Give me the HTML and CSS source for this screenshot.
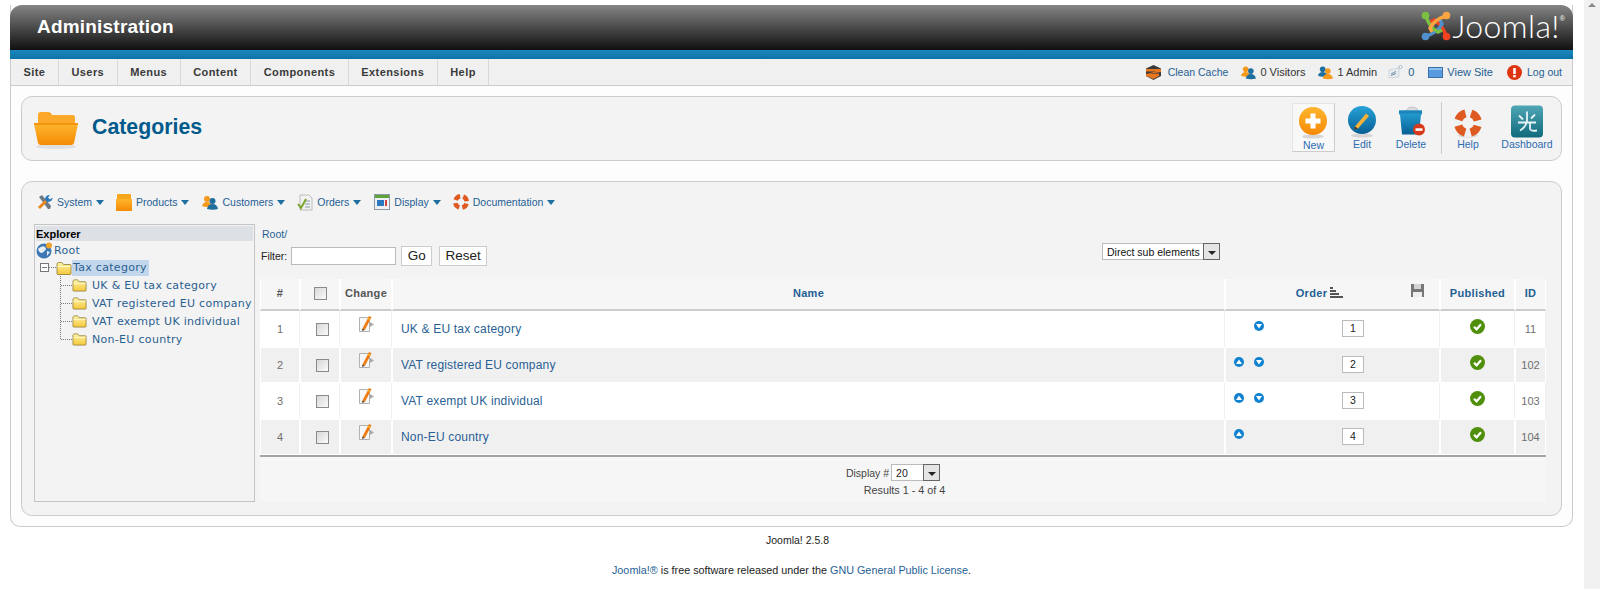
FILE: index.html
```html
<!DOCTYPE html>
<html lang="en">
<head>
<meta charset="utf-8">
<title>Categories - Administration</title>
<link rel="stylesheet" href="styles.css">
</head>
<body>
<svg class="defs" width="0" height="0" aria-hidden="true">
  <defs>
    <linearGradient id="gOrange" x1="0" y1="0" x2="0" y2="1"><stop offset="0" stop-color="#ffb52e"/><stop offset="1" stop-color="#f58a05"/></linearGradient>
    <linearGradient id="gBlue" x1="0" y1="0" x2="0" y2="1"><stop offset="0" stop-color="#27a3d8"/><stop offset="1" stop-color="#075f95"/></linearGradient>
    <linearGradient id="gFolder" x1="0" y1="0" x2="0" y2="1"><stop offset="0" stop-color="#fff3a8"/><stop offset="1" stop-color="#f5c73a"/></linearGradient>
    <linearGradient id="gTeal" x1="0" y1="0" x2="0" y2="1"><stop offset="0" stop-color="#4fa6b5"/><stop offset="1" stop-color="#116a7d"/></linearGradient>
    <symbol id="i-folder" viewBox="0 0 16 14">
      <path d="M1 3.500V12.500Q1 13.500 2 13.500H14Q15 13.500 15 12.500V4.500Q15 3.500 14 3.500H7.500L6 1.500H2.500Q1 1.500 1 3.500Z" fill="url(#gFolder)" stroke="#8c7a32" stroke-width=".8"/>
      <path d="M1.500 5.500H14.500" stroke="#fff8c8" stroke-width="1"/>
    </symbol>
    <symbol id="i-edit" viewBox="0 0 17 18">
      <path d="M1 2.500H11V16.500H1Z" fill="#f7f7f7" stroke="#b0b0b0"/>
      <path d="M11.500 7L15.500 9.500L11.500 12Z" fill="#aaa"/>
      <path d="M4 13.500L10.500 1L13 2.300L6.500 14.800Z" fill="#f07a12"/>
      <path d="M4 13.500L3.500 16L6.500 14.800Z" fill="#5a3a20"/>
      <path d="M9.300 3.300L11.800 4.500" stroke="#ffd23c" stroke-width="1"/>
    </symbol>
    <symbol id="i-up" viewBox="0 0 10 10"><circle cx="5" cy="5" r="5" fill="#0f82d0"/><path d="M5 2.500L8 7H2Z" fill="#fff"/></symbol>
    <symbol id="i-down" viewBox="0 0 10 10"><circle cx="5" cy="5" r="5" fill="#0f82d0"/><path d="M5 7.500L2 3H8Z" fill="#fff"/></symbol>
    <symbol id="i-ok" viewBox="0 0 15 15"><circle cx="7.500" cy="7.500" r="7.500" fill="#4f8f0c"/><path d="M4 7.800L6.600 10.300L11 5.200" fill="none" stroke="#fff" stroke-width="2.200"/></symbol>
    <symbol id="i-people" viewBox="0 0 16 15">
      <circle cx="5" cy="4" r="3" fill="#f59a1c"/><path d="M0 11Q1 7 5 7T10 11Q5 13 0 11Z" fill="#f59a1c"/>
      <circle cx="10.500" cy="6" r="3" fill="#1e6e9e"/><path d="M5 14Q6 9 10.500 9T16 14Q10.500 15.500 5 14Z" fill="#1e6e9e"/>
    </symbol>
    <symbol id="i-people2" viewBox="0 0 16 15">
      <circle cx="5" cy="4" r="3" fill="#1e6e9e"/><path d="M0 11Q1 7 5 7T10 11Q5 13 0 11Z" fill="#1e6e9e"/>
      <circle cx="10.500" cy="6" r="3" fill="#f59a1c"/><path d="M5 14Q6 9 10.500 9T16 14Q10.500 15.500 5 14Z" fill="#f59a1c"/>
    </symbol>
    <symbol id="i-ring" viewBox="0 0 28 28">
      <circle cx="14" cy="14" r="10" fill="none" stroke="#eef1f3" stroke-width="8"/>
      <circle cx="14" cy="14" r="10" fill="none" stroke="#df5a20" stroke-width="8" stroke-dasharray="10 5.700" stroke-dashoffset="-2.850"/>
    </symbol>
  </defs>
</svg>

<div class="page">
  <div class="wrap">
    <header class="masthead">
      <h1 class="admin-title">Administration</h1>
      <div class="logo">
        <svg class="logo-mark" viewBox="0 0 30 30" width="30" height="30" aria-hidden="true">
          <path d="M25 25Q22 14 13 9L9 11" fill="none" stroke="#f44321" stroke-width="3.400"/>
          <path d="M5 25Q16 22 21 13L19 9" fill="none" stroke="#5091cd" stroke-width="3.400"/>
          <path d="M5 5Q8 16 17 21L21 19" fill="none" stroke="#7ac143" stroke-width="3.400"/>
          <path d="M25 5Q14 8 9 17L11 21" fill="none" stroke="#f9a541" stroke-width="3.400"/>
          <circle cx="4.500" cy="4.500" r="3.800" fill="#7ac143"/>
          <circle cx="25.500" cy="4.500" r="3.800" fill="#f9a541"/>
          <circle cx="25.500" cy="25.500" r="3.800" fill="#f44321"/>
          <circle cx="4.500" cy="25.500" r="3.800" fill="#5091cd"/>
        </svg>
        <span class="logo-word">Joomla!</span><sup class="logo-reg">®</sup>
      </div>
    </header>
    <div class="band"></div>
    <nav class="menubar">
      <ul class="menu">
        <li>Site</li><li>Users</li><li>Menus</li><li>Content</li><li>Components</li><li>Extensions</li><li>Help</li>
      </ul>
      <div class="status">
        <a class="status-item cache">
          <svg width="17" height="17" viewBox="0 0 17 17" aria-hidden="true"><path d="M8.500 1L16 4.500V12L8.500 16L1 12V4.500Z" fill="#3a3a3a"/><path d="M1 5H16V8L3 10L14 9.500V12L8.500 15L1 12V10L11 7.500H1Z" fill="#e8761e"/></svg>
          <span>Clean Cache</span>
        </a>
        <span class="status-item dark"><svg width="15" height="15" aria-hidden="true"><use href="#i-people"/></svg><span>0 Visitors</span></span>
        <span class="status-item dark"><svg width="15" height="15" aria-hidden="true"><use href="#i-people2"/></svg><span>1 Admin</span></span>
        <span class="status-item msg">
          <svg width="15" height="14" viewBox="0 0 15 14" aria-hidden="true"><path d="M1 5L11 3V12L1 13Z" fill="#e6edf2" stroke="#c4ccd2" stroke-width=".7"/><path d="M3 9L8 6.500M3 10.500L8 8.500" stroke="#6f8ba3"/><circle cx="12.500" cy="2" r="1.500" fill="#fff" stroke="#88a2b6" stroke-width=".7"/></svg>
          <span>0</span>
        </span>
        <a class="status-item view">
          <svg width="15" height="11" viewBox="0 0 15 11" aria-hidden="true"><rect x=".5" y=".5" width="14" height="10" fill="#5a9be0" stroke="#3b6fa8"/><path d="M1 1H14V3H1Z" fill="#8cc0f0"/></svg>
          <span>View Site</span>
        </a>
        <a class="status-item logout">
          <svg width="15" height="15" viewBox="0 0 15 15" aria-hidden="true"><circle cx="7.500" cy="7.500" r="7.500" fill="#df3410"/><rect x="6.200" y="3" width="2.600" height="6" fill="#fff"/><rect x="6.200" y="10" width="2.600" height="2.300" fill="#fff"/></svg>
          <span>Log out</span>
        </a>
      </div>
    </nav>

    <section class="titlebox">
      <div class="title-left">
        <svg class="title-icon" width="46" height="40" viewBox="0 0 46 40" aria-hidden="true">
          <ellipse cx="23" cy="36.500" rx="20" ry="2.500" fill="#e0e0e0"/>
          <path d="M5 11V5Q5 2 8 2H15Q18 2 19 5H40Q42 5 42 8V13H5Z" fill="#fca82a"/>
          <path d="M1 14H45L41 33Q40.500 35 38 35H8Q5.500 35 5 33Z" fill="url(#gOrange)"/>
          <path d="M1 13H45V15H1Z" fill="#f59410"/>
        </svg>
        <h2 class="page-title">Categories</h2>
      </div>
      <div class="toolbar">
        <a class="tool tool-new">
          <svg width="30" height="32" viewBox="0 0 30 32" aria-hidden="true"><ellipse cx="15" cy="30" rx="11" ry="2" fill="#d6d6d6"/><circle cx="15" cy="14.500" r="14" fill="url(#gOrange)"/><path d="M12.500 7H17.500V12H22.500V17H17.500V22H12.500V17H7.500V12H12.500Z" fill="#fff"/></svg>
          <span>New</span>
        </a>
        <a class="tool tool-edit">
          <svg width="30" height="32" viewBox="0 0 30 32" aria-hidden="true"><ellipse cx="15" cy="30" rx="11" ry="2" fill="#d6d6d6"/><circle cx="15" cy="14.500" r="14" fill="url(#gBlue)"/><path d="M8 21L19 8L22 10.500L11 23L7 24Z" fill="#f7b23a"/><path d="M7 24L8 21L11 23Z" fill="#333"/></svg>
          <span>Edit</span>
        </a>
        <a class="tool tool-delete">
          <svg width="30" height="32" viewBox="0 0 30 32" aria-hidden="true"><path d="M10 5Q14 -1 21 3L22 6H10Z" fill="#dcdcdc" stroke="#aaa" stroke-width=".6"/><path d="M3 5H26V9H25L23 29H6L4 9H3Z" fill="url(#gBlue)"/><path d="M3 5H26V8H3Z" fill="#1c84b8"/><circle cx="23" cy="24" r="6" fill="#d73a1a"/><rect x="19.500" y="22.800" width="7" height="2.500" fill="#fff"/></svg>
          <span>Delete</span>
        </a>
        <span class="tool-sep"></span>
        <a class="tool tool-help">
          <svg width="30" height="32" viewBox="0 0 30 32" aria-hidden="true"><ellipse cx="15" cy="30" rx="10" ry="2" fill="#d6d6d6"/><svg x="1" y="1" width="28" height="28"><use href="#i-ring"/></svg></svg>
          <span>Help</span>
        </a>
        <a class="tool tool-dash">
          <svg width="32" height="32" viewBox="0 0 32 32" aria-hidden="true"><rect width="32" height="32" rx="4" fill="url(#gTeal)"/><path d="M16 6V15Q15 22 9 25M8 10L12 14M24 9L20 13M7 17H25M19 17V23Q19 26 26 25" fill="none" stroke="#e6f4f6" stroke-width="1.800"/></svg>
          <span>Dashboard</span>
        </a>
      </div>
    </section>

    <section class="mainbox">
      <ul class="submenu">
        <li class="sub-system">
          <svg width="16" height="16" viewBox="0 0 16 16" aria-hidden="true"><path d="M2 3L5 1L14 12L13 15L11 15Z" fill="#6d7a86"/><path d="M3 15L1 13L9 5L11 7Z" fill="#e8851c"/><path d="M8 6Q8 1 13 1L11 3.500L13 5.500L15.500 3.500Q15.500 8 10 8Z" fill="#2a78c0"/></svg>
          <span>System</span><i class="caret"></i>
        </li>
        <li class="sub-products">
          <svg width="16" height="17" viewBox="0 0 16 17" aria-hidden="true"><rect x="1" y="0" width="14" height="6" rx="1" fill="#f7a71c"/><rect y="5" width="16" height="12" fill="url(#gOrange)"/></svg>
          <span>Products</span><i class="caret"></i>
        </li>
        <li class="sub-customers">
          <svg width="16" height="15" aria-hidden="true"><use href="#i-people"/></svg>
          <span>Customers</span><i class="caret"></i>
        </li>
        <li class="sub-orders">
          <svg width="16" height="17" viewBox="0 0 16 17" aria-hidden="true"><path d="M3 1H12L15 4V16H3Z" fill="#f2f2f2" stroke="#bbb"/><path d="M8 7H13M8 10H13M8 13H13" stroke="#8a9aa8"/><path d="M1 10L4 14L9 5" fill="none" stroke="#7aa62c" stroke-width="2"/></svg>
          <span>Orders</span><i class="caret"></i>
        </li>
        <li class="sub-display">
          <svg width="16" height="16" viewBox="0 0 16 16" aria-hidden="true"><rect x=".5" y=".5" width="15" height="15" fill="#eef2f5" stroke="#8d9aa6"/><rect x="1" y="1" width="14" height="3" fill="#5ea33a"/><rect x="3" y="6" width="7" height="6" fill="#2a78c0"/><rect x="11" y="6" width="2" height="6" fill="#c44"/></svg>
          <span>Display</span><i class="caret"></i>
        </li>
        <li class="sub-docs">
          <svg width="16" height="16" aria-hidden="true"><use href="#i-ring"/></svg>
          <span>Documentation</span><i class="caret"></i>
        </li>
      </ul>

      <div class="split">
        <aside class="tree">
          <div class="tree-head">Explorer</div>
          <div class="tree-body">
            <div class="node node-root">
              <svg width="17" height="17" viewBox="0 0 17 17" aria-hidden="true"><circle cx="8" cy="9" r="7.500" fill="#3d78b5"/><path d="M2 7Q6 3 9 5T6 11Q3 11 2 7ZM11 9L14 10L11 14Z" fill="#e6eef5"/><circle cx="13" cy="3.500" r="3" fill="#f0a42a"/></svg>
              <span>Root</span>
            </div>
            <div class="node node-tax">
              <span class="minus"></span><i class="dots-h"></i>
              <svg width="16" height="14" aria-hidden="true"><use href="#i-folder"/></svg>
              <span class="selected">Tax category</span>
            </div>
            <div class="node node-child"><i class="dots-h"></i><svg width="15" height="14" aria-hidden="true"><use href="#i-folder"/></svg><span>UK &amp; EU tax category</span></div>
            <div class="node node-child"><i class="dots-h"></i><svg width="15" height="14" aria-hidden="true"><use href="#i-folder"/></svg><span>VAT registered EU company</span></div>
            <div class="node node-child"><i class="dots-h"></i><svg width="15" height="14" aria-hidden="true"><use href="#i-folder"/></svg><span>VAT exempt UK individual</span></div>
            <div class="node node-child"><i class="dots-h"></i><svg width="15" height="14" aria-hidden="true"><use href="#i-folder"/></svg><span>Non-EU country</span></div>
            <i class="dots-v"></i>
          </div>
        </aside>

        <div class="content">
          <div class="crumb">Root/</div>
          <div class="filterbar">
            <div class="filter">
              <label class="filter-label" for="f">Filter:</label>
              <input class="filter-input" id="f" type="text">
              <button class="btn btn-go" type="button">Go</button>
              <button class="btn btn-reset" type="button">Reset</button>
            </div>
            <div class="dropdown dropdown-scope"><span>Direct sub elements</span><b class="drop-arrow"></b></div>
          </div>

          <table class="grid">
            <colgroup><col class="c-num"><col class="c-chk"><col class="c-chg"><col class="c-name"><col class="c-order"><col class="c-pub"><col class="c-id"></colgroup>
            <thead>
              <tr>
                <th class="muted">#</th>
                <th><span class="check check-head"></span></th>
                <th class="muted">Change</th>
                <th>Name</th>
                <th class="th-order">
                  <span class="order-title">Order
                    <svg width="13" height="11" viewBox="0 0 13 11" aria-hidden="true"><path d="M0 0H3V2H0ZM0 3H6V5H0ZM0 6H9V8H0ZM0 9H13V11H0Z" fill="#555"/></svg>
                  </span>
                  <svg class="save" width="15" height="15" viewBox="0 0 15 15" aria-hidden="true"><path d="M1 1H14V14H1Z" fill="#777"/><path d="M4 1H11V6H4Z" fill="#d4d4d4"/><path d="M3 9H12V14H3Z" fill="#eee"/></svg>
                </th>
                <th>Published</th>
                <th>ID</th>
              </tr>
            </thead>
            <tbody>
              <tr class="odd">
                <td class="num">1</td><td><span class="check"></span></td><td class="chg"><svg width="18" height="18" aria-hidden="true"><use href="#i-edit"/></svg></td>
                <td class="name">UK &amp; EU tax category</td>
                <td class="order"><div class="order-cell"><span class="arrows"><i class="slot"></i><svg width="10" height="10" aria-hidden="true"><use href="#i-down"/></svg></span><span class="order-box">1</span></div></td>
                <td class="pub"><svg width="15" height="15" aria-hidden="true"><use href="#i-ok"/></svg></td><td class="id">11</td>
              </tr>
              <tr class="even">
                <td class="num">2</td><td><span class="check"></span></td><td class="chg"><svg width="18" height="18" aria-hidden="true"><use href="#i-edit"/></svg></td>
                <td class="name">VAT registered EU company</td>
                <td class="order"><div class="order-cell"><span class="arrows"><svg width="10" height="10" aria-hidden="true"><use href="#i-up"/></svg><svg width="10" height="10" aria-hidden="true"><use href="#i-down"/></svg></span><span class="order-box">2</span></div></td>
                <td class="pub"><svg width="15" height="15" aria-hidden="true"><use href="#i-ok"/></svg></td><td class="id">102</td>
              </tr>
              <tr class="odd">
                <td class="num">3</td><td><span class="check"></span></td><td class="chg"><svg width="18" height="18" aria-hidden="true"><use href="#i-edit"/></svg></td>
                <td class="name">VAT exempt UK individual</td>
                <td class="order"><div class="order-cell"><span class="arrows"><svg width="10" height="10" aria-hidden="true"><use href="#i-up"/></svg><svg width="10" height="10" aria-hidden="true"><use href="#i-down"/></svg></span><span class="order-box">3</span></div></td>
                <td class="pub"><svg width="15" height="15" aria-hidden="true"><use href="#i-ok"/></svg></td><td class="id">103</td>
              </tr>
              <tr class="even">
                <td class="num">4</td><td><span class="check"></span></td><td class="chg"><svg width="18" height="18" aria-hidden="true"><use href="#i-edit"/></svg></td>
                <td class="name">Non-EU country</td>
                <td class="order"><div class="order-cell"><span class="arrows"><svg width="10" height="10" aria-hidden="true"><use href="#i-up"/></svg><i class="slot"></i></span><span class="order-box">4</span></div></td>
                <td class="pub"><svg width="15" height="15" aria-hidden="true"><use href="#i-ok"/></svg></td><td class="id">104</td>
              </tr>
            </tbody>
          </table>
          <div class="listfoot">
            <div class="display-row"><span>Display #</span><div class="dropdown dropdown-limit"><span>20</span><b class="drop-arrow"></b></div></div>
            <div class="results">Results 1 - 4 of 4</div>
          </div>
        </div>
      </div>
    </section>
  </div>
  <footer class="pagefoot">
    <p class="version">Joomla! 2.5.8</p>
    <p class="license"><a>Joomla!®</a> is free software released under the <a>GNU General Public License</a>.</p>
  </footer>
</div>
<div class="scrollbar"><i class="scroll-up"></i></div>
</body>
</html>
```

FILE: styles.css
```css
* { box-sizing: border-box; }
html, body { height: 100%; }
body {
  margin: 0;
  display: flex;
  overflow: hidden;
  background: #fff;
  font-family: "Liberation Sans", Arial, sans-serif;
  font-size: 11px;
  color: #333;
}
.defs { position: absolute; }
ul { margin: 0; padding: 0; list-style: none; }
a { color: #1f6094; }
h1, h2, p { margin: 0; }
svg { display: block; flex: none; }

.page { width: 1584px; padding: 5px 11px 0 10px; }
.scrollbar { flex: 1; background: #f1f1f1; display: flex; justify-content: center; padding-top: 3px; }
.scroll-up { width: 0; height: 0; border: 4px solid transparent; border-top: 0; border-bottom: 4px solid #8a8a8a; }

.wrap {
  height: 522px;
  border: 1px solid #ccc;
  border-top: 0;
  border-radius: 0 0 10px 10px;
  background: #fdfdfd;
}
.masthead {
  height: 45px;
  margin: 0 -1px;
  padding: 0 8px 0 27px;
  display: flex;
  align-items: center;
  justify-content: space-between;
  border-radius: 12px 12px 0 0;
  background: linear-gradient(#858585, #101010);
}
.admin-title { font-size: 19px; letter-spacing: .2px; color: #fff; font-weight: bold; margin-top: -2px; }
.logo { display: flex; align-items: center; color: #fff; margin-top: -4px; }
.logo-mark { margin-right: 1px; }
.logo-word { font-family: Lato, sans-serif; font-weight: 300; font-size: 32px; letter-spacing: .4px; line-height: 1; }
.logo-reg { font-size: 7px; align-self: flex-start; margin-top: 5px; line-height: 1; }
.band { height: 9px; margin: 0 -1px; background: linear-gradient(#1c88bf, #0c72a5); }

.menubar {
  height: 27px;
  display: flex;
  justify-content: space-between;
  background: #f0f0f0;
  border-bottom: 1px solid #ccc;
}
.menu { display: flex; }
.menu li {
  padding: 0 12.500px;
  line-height: 26px;
  font-weight: bold;
  letter-spacing: .43px;
  color: #3a3a3a;
  border-right: 1px solid #d8d8d8;
}
.status { display: flex; align-items: center; padding-right: 10px; }
.status-item { display: flex; align-items: center; gap: 4px; margin-left: 14px; white-space: nowrap; }
.status-item.cache { gap: 6px; font-size: 10.500px; }
.status-item.dark { color: #333; margin-left: 13px; }
.status-item.msg { color: #1f6094; gap: 5px; margin-left: 11px; }
.status-item.logout { gap: 5px; font-size: 10.500px; }

.titlebox {
  height: 65px;
  margin: 10px 10px 0;
  display: flex;
  justify-content: space-between;
  border: 1px solid #ccc;
  border-radius: 11px;
  background: #f3f3f3;
}
.title-left { display: flex; align-items: center; padding-left: 11px; }
.title-icon { margin-top: 3px; }
.page-title { margin-left: 13px; font-size: 21.300px; font-weight: bold; color: #005a8c; margin-top: -3px; }
.toolbar { display: flex; align-items: flex-start; padding: 6px 1px 0 0; }
.tool {
  height: 49px;
  display: flex;
  flex-direction: column;
  align-items: center;
  color: #2c6bb0;
  font-size: 10.500px;
}
.tool svg { height: 33px; margin-top: 2px; }
.tool span { margin-top: 0; }
.tool-new { width: 43px; background: #f8f8f8; border: 1px solid #e6e6e6; border-right-color: #ccc; border-bottom-color: #ccc; }
.tool-new svg { margin: 2px 2px 0 0; }
.tool-edit { width: 54px; }
.tool-delete { width: 44px; margin-right: 8px; }
.tool-sep { width: 1px; height: 52px; margin-top: -1px; background: #ccc; }
.tool-help { width: 52px; }
.tool-dash { width: 66px; }

.mainbox {
  height: 335px;
  margin: 20px 10px 0;
  padding: 0 15px 13px 12px;
  border: 1px solid #ccc;
  border-radius: 11px;
  background: #f3f3f3;
}
.submenu { height: 42px; display: flex; align-items: center; padding: 0 0 2px 3px; font-size: 10.500px; color: #1f6094; }
.submenu li { display: flex; align-items: center; gap: 4px; margin-right: 12px; }
.submenu .sub-products, .submenu .sub-orders { margin-right: 13px; }
.caret { width: 0; height: 0; margin-left: 0; border: 4px solid transparent; border-bottom: 0; border-top: 5px solid #1f6ea0; }

.split { display: flex; gap: 5px; height: 278px; }
.tree { width: 221px; flex: none; border: 1px solid #c4c4c4; }
.tree-head { height: 15px; margin: 1px 1px 0; line-height: 17px; font-weight: bold; color: #000; background: #dde1e5; }
.tree-body { position: relative; padding: 0 0 0 1px; font-family: "DejaVu Sans", sans-serif; font-size: 11px; letter-spacing: .3px; color: #2b5f90; }
.node { height: 18px; display: flex; align-items: center; }
.node-root { gap: 1px; }
.node-tax { height: 17px; padding-left: 4px; }
.minus { width: 9px; height: 9px; flex: none; border: 1px solid #777; background: linear-gradient(#777, #777) center / 5px 1px no-repeat #fff; }
.dots-h { width: 7px; flex: none; border-top: 1px dotted #777; }
.selected { margin-left: 0; padding: 0 2px 0 1px; line-height: 16px; background: #c2d6ec; }
.node-child { padding-left: 25px; }
.node-child .dots-h { width: 11px; }
.node-child span { margin-left: 5px; }
.dots-v { position: absolute; left: 25px; top: 35px; height: 63px; border-left: 1px dotted #777; }

.content { flex: 1; min-width: 0; }
.crumb { height: 22px; padding: 3px 0 0 2px; line-height: 14px; font-size: 10.500px; color: #1f6094; }
.filterbar { height: 33px; display: flex; justify-content: space-between; align-items: flex-start; padding: 0 326px 0 1px; }
.filter { display: flex; align-items: center; }
.filter-label { font-size: 10.500px; color: #222; margin-right: 4px; }
.filter-input { width: 105px; height: 18px; margin: 0; padding: 0; background: #fff; border: 1px solid #bbb; }
.btn {
  height: 20px;
  margin: 0 0 0 5px;
  padding: 0;
  font-family: "Liberation Sans", sans-serif;
  font-size: 13.500px;
  line-height: 18px;
  color: #222;
  background: #fff;
  border: 1px solid #ccc;
}
.btn-go { width: 31px; }
.btn-reset { width: 48px; margin-left: 7px; }
.dropdown { display: flex; align-items: center; justify-content: space-between; height: 17px; background: #fff; border: 1px solid #bbb; font-size: 10.500px; color: #111; margin-top: -3px; }
.dropdown > span { padding-left: 4px; }
.dropdown-scope { width: 118px; }
.drop-arrow {
  width: 17px;
  height: 17px;
  margin: -1px -1px -1px 0;
  border: 1px solid #666;
  background: #e4e4e4;
  display: flex;
  align-items: center;
  justify-content: center;
}
.drop-arrow::after { content: ""; margin-top: 3px; border: 4px solid transparent; border-bottom: 0; border-top: 4px solid #222; }

.grid { width: 100%; table-layout: fixed; border-collapse: separate; border-spacing: 0; border-bottom: 2px solid #a3a3a3; }
.c-num { width: 40px; } .c-chk { width: 40px; } .c-chg { width: 52px; } .c-order { width: 215px; } .c-pub { width: 75px; } .c-id { width: 31px; }
th { height: 32px; padding: 0 0 2px; background: #f6f6f6; border: 1px solid #fff; border-width: 0 1px 2px; border-bottom-color: #ccc; color: #1f6094; font-size: 11px; letter-spacing: .3px; text-align: center; }
th.muted { color: #555; }
td { height: 36px; padding: 0; text-align: center; font-size: 11px; color: #6e6e6e; }
.even td { background: #f0f0f0; border: 1px solid #fff; border-width: 1px 1px; }
.odd td { background: #fff; border-right: 1px solid #f0f0f0; border-left: 1px solid #fff; }
td svg { margin: 0 auto; }
.chg svg { transform: translate(1px, -5px); }
.pub svg { transform: translateY(-3px); }
td.name { padding-left: 8px; text-align: left; font-size: 12px; letter-spacing: .18px; color: #2a5f94; }
.check { display: block; width: 13px; height: 13px; margin: 0 auto; border: 1px solid #8a8a8a; background: linear-gradient(135deg, #d8d8d8, #fafafa); transform: translate(2px, 0); }
.check-head { width: 13px; transform: translate(0, 0); }
.th-order { position: relative; }
.order-title { display: inline-flex; gap: 3px; align-items: flex-start; margin-right: 26px; }
.save { position: absolute; left: 184px; top: 4px; }
.order-cell { display: flex; align-items: center; padding-left: 8px; }
.arrows { display: flex; gap: 10px; transform: translateY(-3px); }
.slot { width: 10px; }
.order-box { width: 22px; height: 17px; margin-left: 78px; line-height: 15px; background: #fff; border: 1px solid #bbb; color: #222; font-size: 10.500px; transform: translateY(-1px); }

.listfoot { height: 45px; padding-top: 7px; background: #f6f6f6; font-size: 10.800px; color: #444; }
.display-row { display: flex; justify-content: center; align-items: center; gap: 2px; padding-right: 20px; font-size: 10.500px; }
.dropdown-limit { width: 49px; height: 17px; margin: 0; color: #222; }
.dropdown-limit .drop-arrow { width: 17px; }
.results { margin-top: 2px; text-align: center; padding-left: 3px; line-height: 15px; }

.pagefoot { text-align: center; font-size: 10.800px; color: #222; }
.version { padding: 6px 0 0 12px; line-height: 14px; font-size: 10.500px; }
.license { padding-top: 16px; line-height: 14px; }
```
